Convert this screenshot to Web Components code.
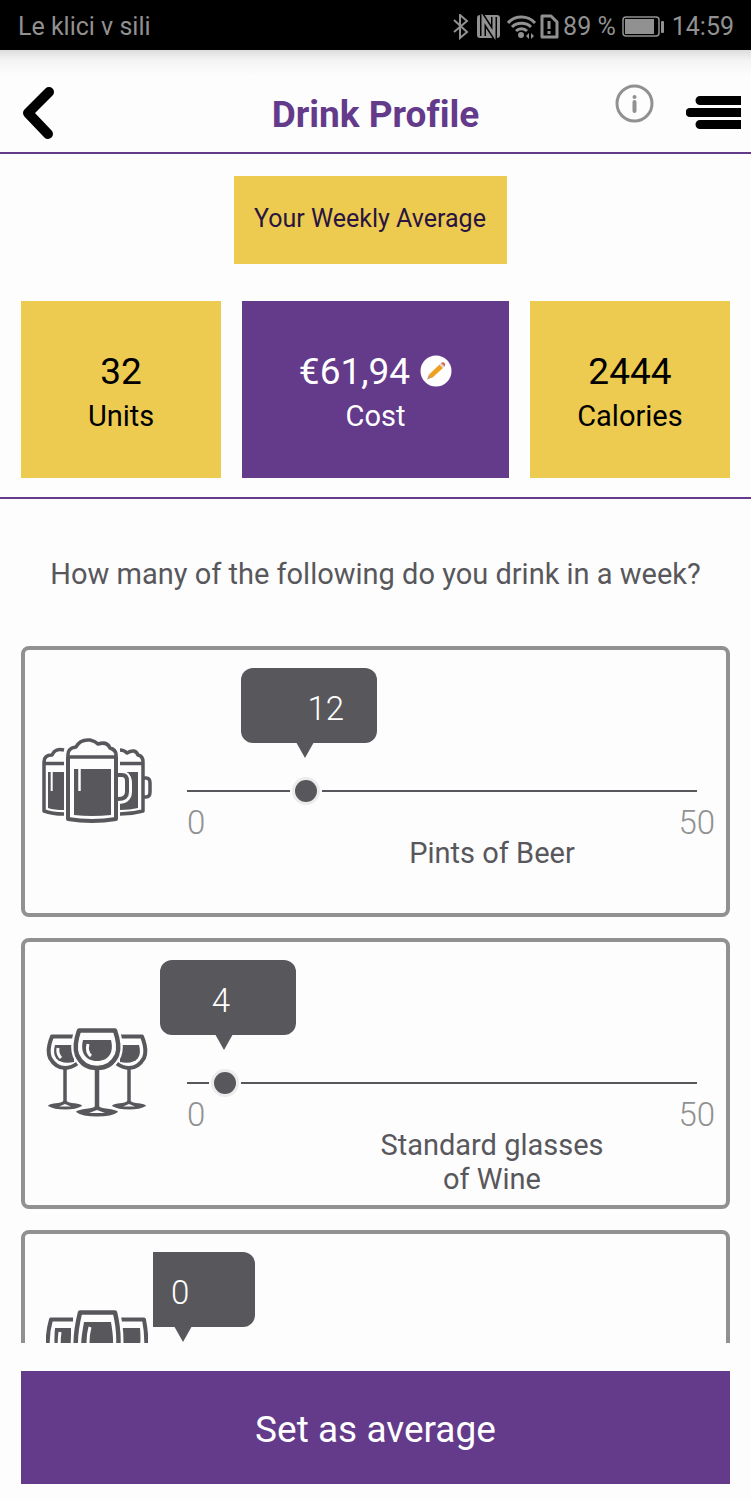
<!DOCTYPE html>
<html lang="en">
<head>
<meta charset="utf-8">
<meta name="viewport" content="width=device-width, initial-scale=1">
<title>Drink Profile</title>
<style>
  html, body { height: 100%; }
  body {
    margin: 0;
    background: #fdfdfd;
    color: #58575c;
    font-family: Roboto, "Liberation Sans", sans-serif;
    font-variant-ligatures: none;
    --purple: #643a8b;
    --yellow: #edcb51;
    --ink: #58575c;
    --page: #fdfdfd;
  }
</style>
</head>
<body>
<drink-app></drink-app>

<template id="t-app">
  <style>
    :host { display: flex; flex-direction: column; height: 100vh; }
    .list { flex: 1; min-height: 0; overflow-y: auto; scrollbar-width: none; padding: 0 21px; }
    .question { margin: 0; padding: 58px 0 55px; text-align: center; font-size: 29px; line-height: 34px; font-weight: 400; }
    .cards { display: flex; flex-direction: column; gap: 21px; }
    .summary { border-bottom: 2px solid var(--purple); padding: 22px 21px 19px; display: flex; flex-direction: column; align-items: center; gap: 37px; }
    .tag { margin-right: 10px; background: var(--yellow); color: #2a1540; font-size: 25px; line-height: 30px; padding: 28px 21px 30px 20px; }
    .stats { align-self: stretch; display: grid; grid-template-columns: 3fr 4fr 3fr; gap: 21px; }
    footer { padding: 28px 21px 16px; }
  </style>
  <status-bar>Le klici v sili</status-bar>
  <page-header>Drink Profile</page-header>
  <section class="summary">
    <div class="tag">Your Weekly Average</div>
    <div class="stats">
      <stat-tile value="32">Units</stat-tile>
      <stat-tile value="€61,94" editable>Cost</stat-tile>
      <stat-tile value="2444">Calories</stat-tile>
    </div>
  </section>
  <main class="list">
    <h2 class="question">How many of the following do you drink in a week?</h2>
    <div class="cards">
      <drink-slider value="12" icon="beer">Pints of Beer</drink-slider>
      <drink-slider value="4" icon="wine">Standard glasses of Wine</drink-slider>
      <drink-slider value="0" icon="tall" unlabelled></drink-slider>
    </div>
  </main>
  <footer><action-button>Set as average</action-button></footer>
</template>

<template id="t-status">
  <style>
    :host { display: flex; align-items: center; justify-content: space-between; box-sizing: border-box; height: 50px; padding: 3px 17px 0 18px; background: #000; color: #919191; font-size: 25px; line-height: 30px; white-space: nowrap; }
    .right { display: flex; align-items: center; }
    svg { display: block; }
    .battery { margin-left: 6px; }
    .time { margin-left: 7px; }
  </style>
  <span><slot></slot></span>
  <div class="right">
    <svg width="110" height="26" viewBox="0 0 110 26" fill="none" stroke="#919191" stroke-width="2">
      <path d="M1 6l13 12-7 6V1l7 6L1 18"/>
      <rect x="24" y="1" width="23" height="23" rx="3" fill="#919191" stroke="none"/>
      <path d="M30 22V4l11 17V3" stroke="#000" stroke-width="6"/>
      <path d="M30 22V4l11 17V3" stroke="#919191" stroke-width="3"/>
      <path d="M55 9c7-8 20-8 27 0M59 13c5-5 14-5 19 0M63 17c3-3 8-3 11 0" stroke-width="3"/>
      <circle cx="68" cy="21" r="2" fill="#919191"/>
      <path d="M76 19l-3 3 3 3zM78 19l3 3-3 3z" fill="#919191" stroke="none"/>
      <path d="M89 2h9l6 6v15H89z" stroke-width="3" stroke-linejoin="round"/>
      <path d="M96 7v8M96 17v3" stroke-width="3"/>
    </svg>
    <span>89 %</span>
    <svg class="battery" width="43" height="22" viewBox="0 0 43 22">
      <rect x="1" y="1" width="36" height="19" rx="3" fill="none" stroke="#919191" stroke-width="1.500"/>
      <rect x="3" y="3" width="29" height="15" fill="#919191"/>
      <rect x="39" y="5" width="3" height="12" rx="1" fill="#919191"/>
    </svg>
    <span class="time">14:59</span>
  </div>
</template>

<template id="t-header">
  <style>
    :host { display: grid; grid-template-columns: 1fr auto 1fr; align-items: center; height: 102px; padding: 0 10px; border-bottom: 2px solid var(--purple); background: linear-gradient(#dcdcdc, #f4f4f4 10px, var(--page) 26px); }
    h1 { margin: 0; padding-top: 28px; font-size: 37px; line-height: 44px; font-weight: 700; color: var(--purple); }
    button { border: 0; background: none; padding: 0; margin: 0; }
    svg { display: block; }
    .left { padding: 24px 0 0 12px; }
    .right { display: flex; justify-content: flex-end; align-items: flex-start; gap: 32px; padding-top: 10px; }
    .menu { padding-top: 12px; }
  </style>
  <button class="left" aria-label="Back">
    <svg width="34" height="54" viewBox="0 0 34 54" fill="none" stroke="#000" stroke-width="10" stroke-linecap="round" stroke-linejoin="round"><path d="M27 6L6 27l20 21"/></svg>
  </button>
  <h1><slot></slot></h1>
  <div class="right">
    <button aria-label="Information">
      <svg width="39" height="39" viewBox="0 0 39 39"><circle cx="19.500" cy="19.500" r="17.500" fill="none" stroke="#919191" stroke-width="3"/><circle cx="19.500" cy="13" r="2" fill="#919191"/><path d="M19.500 18v9" stroke="#919191" stroke-width="4" stroke-linecap="round"/></svg>
    </button>
    <button class="menu" aria-label="Menu">
      <svg width="55" height="33" viewBox="0 0 55 33"><path d="M14 0h41v9H14a4.500 4.500 0 0 1 0-9zM4 12h51v9H4a4.500 4.500 0 0 1 0-9zM14 24h41v9H14a4.500 4.500 0 0 1 0-9z"/></svg>
    </button>
  </div>
</template>

<template id="t-stat">
  <style>
    :host { display: flex; flex-direction: column; align-items: center; padding: 48px 0 41px; background: var(--yellow); color: #000; }
    :host([editable]) { background: var(--purple); color: #fff; }
    .value { display: flex; align-items: center; gap: 10px; font-size: 37px; line-height: 46px; }
    .name { font-size: 29px; line-height: 42px; }
    button { border: 0; padding: 0 0 3px; background: none; }
    svg { display: block; }
    :host(:not([editable])) button { display: none; }
  </style>
  <div class="value"><span></span>
    <button aria-label="Edit cost">
      <svg width="32" height="32" viewBox="0 0 32 32"><circle cx="16" cy="16" r="15.500" fill="#fff"/><path d="M7 24.500l2-5 3 3z" fill="#c9965c"/><path d="M9 19.500L19.500 9.500l3.500 3.500-11 10z" fill="#f0a020"/><path d="M19.500 9.500l1.500-1.500 3.500 3.500L23 13z" fill="#d8d8d8"/><path d="M21 8q2-1.500 3.500 0t0 3.500z" fill="#dc5a50"/></svg>
    </button>
  </div>
  <div class="name"><slot></slot></div>
</template>

<template id="t-slider">
  <style>
    :host { display: grid; grid-template-columns: 128px 1fr; height: 263px; border: 4px solid #919191; border-radius: 8px; }
    .icon { display: flex; align-items: center; justify-content: center; padding: 0 0 2px 15px; }
    .pane { position: relative; overflow: hidden; display: flex; flex-direction: column; }
    .bubble { position: absolute; top: 18px; left: calc((100% - 63px) * var(--ratio) - 34px); width: 136px; height: 75px; box-sizing: border-box; padding-left: 52px; border-radius: 12px; background: var(--ink); color: #fff; font-size: 33px; line-height: 82px; font-weight: 300; }
    .bubble.wide { padding-left: 66px; }
    .bubble::after { content: ""; position: absolute; top: 74px; left: 55px; border: 9px solid transparent; border-top: 16px solid var(--ink); border-bottom: 0; }
    input {
      -webkit-appearance: none; appearance: none;
      height: 38px; margin: 122px 21px 0 20px;
      background: linear-gradient(var(--ink), var(--ink)) 14px 18px / calc(100% - 22px) 2px no-repeat;
    }
    input::-webkit-slider-thumb { -webkit-appearance: none; width: 22px; height: 22px; border-radius: 50%; background: var(--ink); box-shadow: 0 0 0 3px #ececec, 0 0 0 5px var(--page); }
    .scale { display: flex; justify-content: space-between; padding: 0 11px 0 34px; font-size: 33px; line-height: 26px; font-weight: 300; color: #919191; }
    label { align-self: center; max-width: 250px; margin-left: 105px; text-align: center; font-size: 29px; line-height: 34px; }
    :host([unlabelled]) .scale, :host([unlabelled]) label { display: none; }
  </style>
  <div class="icon"></div>
  <div class="pane">
    <output class="bubble" for="amount"></output>
    <input id="amount" type="range" min="0" max="50">
    <div class="scale"><span>0</span><span>50</span></div>
    <label for="amount"><slot></slot></label>
  </div>
</template>

<template id="t-button">
  <style>
    :host { display: block; }
    button { display: block; width: 100%; border: 0; padding: 36px 0 31px; background: var(--purple); color: #fff; font: inherit; font-size: 37px; line-height: 46px; }
  </style>
  <button><slot></slot></button>
</template>

<script>
  const icons = {
    beer: `<svg width="110" height="86" viewBox="0 0 110 86" fill="none" stroke="#58575c" stroke-width="3.500" stroke-linejoin="round">
      <path d="M22 12Q13 10 10 17 2 17 2 24V73Q10 76 22 76M2 25.500H22"/>
      <path d="M6 34H22V72Q12 72 6 70z" fill="#58575c" stroke="none"/><path d="M9.700 34V53" stroke="#fdfdfd" stroke-width="2"/>
      <path d="M78 12Q82 12 85 15 93 10 96 17 101 18 101 24V73Q90 76 78 76M78 25.500H101M101 40H104Q108 40 108 45V54Q108 59 104 59H101"/>
      <path d="M85 34H96V70Q88 72 78 72V64H82Q90 62 90 54V45Q90 38 85 35z" fill="#58575c" stroke="none"/>
      <path d="M26 20Q25 10 34 9 38 0 48 2 53 3 56 6 65 3 68 10 75 12 74 20V81Q50 86 26 81z" fill="#fdfdfd" stroke="#fdfdfd" stroke-width="8"/>
      <path d="M76 37H80Q85 37 85 43V55Q85 62 76 62" stroke="#fdfdfd" stroke-width="8"/>
      <path d="M26 19V81Q50 85 74 81V19" stroke-width="4"/>
      <path d="M26 19Q25 10 34 9 38 1 48 2 53 3 56 6 65 3 68 10 75 12 74 19zM26 19H74"/>
      <path d="M76 37H80Q85 37 85 43V54Q85 61 76 61" stroke-width="4"/>
      <path d="M32 31H69V77Q50 79 32 77z" fill="#58575c" stroke="none"/><path d="M37.500 31V53" stroke="#fdfdfd" stroke-width="2.500"/>
    </svg>`,
    wine: `<svg width="102" height="89" viewBox="0 0 102 89" fill="none" stroke="#58575c" stroke-linejoin="round">
      <path d="M28 8.500H6C3 16 1 23 4 30 8 37 13 40 19 40 24 40 28 38 32 35" stroke-width="4"/>
      <path d="M9 17H28V34C14 37 5 31 9 17z" fill="#58575c" stroke="none"/><path d="M12 20Q11 26 15 30" stroke="#fdfdfd" stroke-width="3"/>
      <path d="M19 40V74" stroke-width="3.500"/>
      <path d="M19 71Q20 74 26 75 36 76 36 78 30 81.500 19 81.500T2 78Q2 76 12 75 18 74 19 71z" fill="#58575c" stroke="none"/><path d="M13 78.500H25L19 76z" fill="#fdfdfd" stroke="none"/>
      <path d="M74 8.500H96C99 16 101 23 98 30 94 37 89 40 83 40 78 40 74 38 70 35" stroke-width="4"/>
      <path d="M74 17H93C97 31 88 37 74 34z" fill="#58575c" stroke="none"/>
      <path d="M83 40V74" stroke-width="3.500"/>
      <path d="M83 71Q84 74 90 75 100 76 100 78 94 81.500 83 81.500T66 78Q66 76 76 75 82 74 83 71z" fill="#58575c" stroke="none"/><path d="M77 78.500H89L83 76z" fill="#fdfdfd" stroke="none"/>
      <path d="M33 2.500H69C72 11 74 19 71 27 67 36 60 40 51 40 42 40 35 36 31 27 28 19 30 11 33 2.500z" fill="#fdfdfd" stroke="#fdfdfd" stroke-width="9"/>
      <path d="M33 2.500H69C72 11 74 19 71 27 67 36 60 40 51 40 42 40 35 36 31 27 28 19 30 11 33 2.500z" stroke-width="4.500"/>
      <path d="M37 12H65C68 24 63 33 51 33S34 24 37 12z" fill="#58575c" stroke="none"/><path d="M42 16Q40 24 45 28" stroke="#fdfdfd" stroke-width="3"/>
      <path d="M51 76Q53 80 60 80.500 72 82 72 84 66 88.500 51 88.500T30 84Q30 82 42 80.500 49 80 51 76z" fill="#58575c" stroke="#fdfdfd" stroke-width="4" paint-order="stroke"/>
      <path d="M51 40V81" stroke-width="4.500"/><path d="M43 85H59L51 82z" fill="#fdfdfd" stroke="none"/>
    </svg>`,
    tall: `<svg width="102" height="110" viewBox="0 0 102 110" fill="none" stroke="#58575c" stroke-linejoin="round">
      <path d="M27 9.500H5C2 20 1 32 2.500 42 5 60 12 66 19 66V100M2 102H36" stroke-width="4"/>
      <path d="M9 18H25V60C10 56 7 40 9 18z" fill="#58575c" stroke="none"/><path d="M14 22Q12 36 15 50" stroke="#fdfdfd" stroke-width="3"/>
      <path d="M75 9.500H98C100 20 101 32 99.500 42 97 60 90 66 83 66V100M66 102H100" stroke-width="4"/>
      <path d="M75 18H94C96 40 92 56 75 60z" fill="#58575c" stroke="none"/>
      <path d="M34 2.500H69C72 15 73 30 72 40 70 60 62 70 51 70 40 70 32 60 30 40 29 30 31 15 34 2.500z" fill="#fdfdfd" stroke="#fdfdfd" stroke-width="10"/>
      <path d="M34 2.500H69C72 15 73 30 72 40 70 60 62 70 51 70 40 70 32 60 30 40 29 30 31 15 34 2.500zM51 70V106M30 107H72" stroke-width="4.500"/>
      <path d="M38 12H65C67 24 68 34 66 42 63 56 58 62 51 62 44 62 38 56 36 42 34 34 36 24 38 12z" fill="#58575c" stroke="none"/><path d="M44 17Q40 32 44 48" stroke="#fdfdfd" stroke-width="3"/>
    </svg>`
  };

  class Base extends HTMLElement {
    constructor() {
      super();
      const root = this.attachShadow({ mode: 'open' });
      root.append(document.getElementById(this.constructor.template).content.cloneNode(true));
    }
  }
  class StatusBar extends Base { static template = 't-status'; }
  class PageHeader extends Base { static template = 't-header'; }
  class ActionButton extends Base { static template = 't-button'; }
  class StatTile extends Base {
    static template = 't-stat';
    connectedCallback() {
      this.shadowRoot.querySelector('.value span').textContent = this.getAttribute('value');
    }
  }
  class DrinkSlider extends Base {
    static template = 't-slider';
    connectedCallback() {
      const input = this.shadowRoot.querySelector('input');
      this.shadowRoot.querySelector('.icon').innerHTML = icons[this.getAttribute('icon')];
      if (this.hasAttribute('unlabelled')) input.setAttribute('aria-label', 'Other drinks');
      input.value = this.getAttribute('value');
      input.addEventListener('input', () => this.update());
      this.update();
    }
    update() {
      const value = this.shadowRoot.querySelector('input').value;
      const bubble = this.shadowRoot.querySelector('.bubble');
      bubble.textContent = value;
      bubble.classList.toggle('wide', value.length > 1);
      bubble.style.setProperty('--ratio', value / 50);
    }
  }
  class DrinkApp extends Base { static template = 't-app'; }

  customElements.define('status-bar', StatusBar);
  customElements.define('page-header', PageHeader);
  customElements.define('stat-tile', StatTile);
  customElements.define('drink-slider', DrinkSlider);
  customElements.define('action-button', ActionButton);
  customElements.define('drink-app', DrinkApp);
</script>
</body>
</html>
